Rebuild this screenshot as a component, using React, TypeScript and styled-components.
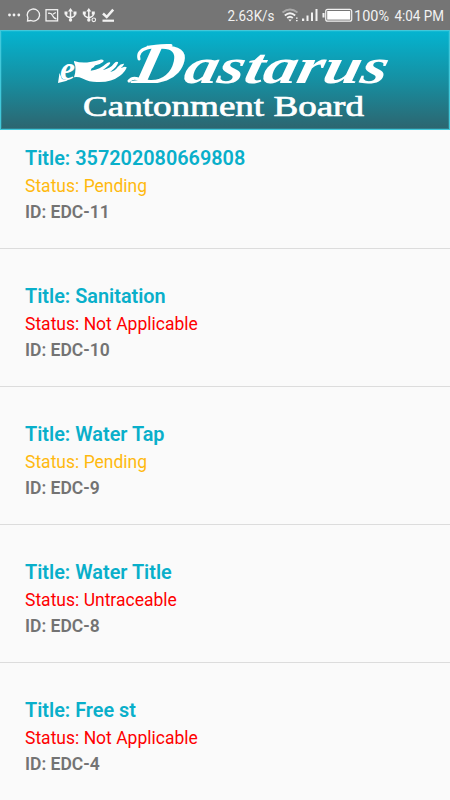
import React from "react";
import styled, { createGlobalStyle } from "styled-components";

const GlobalStyle = createGlobalStyle`
  * { box-sizing: border-box; }
  body { margin: 0; background: #fafafa; font-family: Roboto, sans-serif; }
`;

const Screen = styled.main`
  width: 450px;
  height: 800px;
  overflow: hidden;
  display: flex;
  flex-direction: column;
  background: #fafafa;
`;

const StatusBar = styled.header`
  flex: none;
  height: 30px;
  background: #757575;
`;

const StatusArt = styled.svg`
  display: block;
  font-family: Roboto, sans-serif;
  font-size: 14px;
`;

const Banner = styled.div`
  flex: none;
  height: 100px;
  border: 1px solid #41c8da;
  background: linear-gradient(#04b4d0, #1591a4 48%, #2d656f);
  box-shadow: inset 0 0 0 1px rgba(65, 200, 218, 0.25);
`;

const LogoArt = styled.svg`
  display: block;
  margin: -1px;
  font-family: "Liberation Serif", serif;
`;

const List = styled.ul`
  margin: 0;
  padding: 0;
  list-style: none;
`;

const Item = styled.li`
  height: 138px;
  padding: 36px 25px 0;
  border-bottom: 1px solid #dcdcdc;
  white-space: nowrap;

  &:first-child {
    height: 119px;
    padding-top: 17px;
  }
`;

const Title = styled.h2`
  margin: 0;
  height: 27px;
  font-size: 19.85px;
  line-height: 24px;
  font-weight: 600;
  color: #09afca;
`;

const Status = styled.p<{ $pending: boolean }>`
  margin: 0;
  height: 26px;
  font-size: 17.5px;
  line-height: 24px;
  color: ${(p) => (p.$pending ? "#ffb90f" : "#fe0000")};
`;

const Ident = styled.p`
  margin: 0;
  font-size: 17.5px;
  line-height: 24px;
  font-weight: 600;
  color: #737373;
`;

const complaints = [
  { title: "357202080669808", status: "Pending", id: "EDC-11" },
  { title: "Sanitation", status: "Not Applicable", id: "EDC-10" },
  { title: "Water Tap", status: "Pending", id: "EDC-9" },
  { title: "Water Title", status: "Untraceable", id: "EDC-8" },
  { title: "Free st", status: "Not Applicable", id: "EDC-4" },
];

function UsbIcon({ x, dot }: { x: number; dot?: boolean }) {
  return (
    <g transform={`translate(${x} 0)`}>
      <path d="M0 10v9M-4.500 12v2.500q0 2 4.500 3.500q4.500 -1.500 4.500 -3.500V12" fill="none" stroke="#f2f2f2" strokeWidth="1.500" />
      <path d="M-2.500 11.500L0 8l2.500 3.500zM-6 11.500h3v3h-3zM3 11.500h3v3H3z" fill="#f2f2f2" />
      <circle cy="20" r="1.700" fill="#f2f2f2" />
      {dot && <circle cx="5" cy="19.800" r="1.800" fill="#757575" stroke="#f2f2f2" strokeWidth="1.100" />}
    </g>
  );
}

function SystemStatus() {
  return (
    <StatusArt width="450" height="30" fill="#f2f2f2">
      <circle cx="9.500" cy="15" r="1.400" />
      <circle cx="14" cy="15" r="1.400" />
      <circle cx="18.800" cy="15" r="1.400" />
      <path d="M27.500 21l.4-3.200a6.200 6 0 1 1 3 2.700z" fill="none" stroke="#f2f2f2" strokeWidth="1.300" />
      <g fill="none" stroke="#f2f2f2" strokeWidth="1.300">
        <rect x="46" y="9.700" width="11.600" height="11.200" />
        <path d="M48 13.300q3.500-.5 4.500 2.200 1.500 3.300 4 3.300M52.800 14.200l3-1.700" />
      </g>
      <UsbIcon x={70.5} />
      <UsbIcon x={88.8} dot />
      <path d="M103 13.500l3.700 3.500 6.500-7.400" fill="none" stroke="#f2f2f2" strokeWidth="2.500" />
      <path d="M102.500 19.600h11.500v2.200h-11.500z" />
      <text x="227.500" y="20.500" textLength="47" lengthAdjust="spacingAndGlyphs">2.63K/s</text>
      <g fill="none" stroke="#f2f2f2" strokeWidth="1.800">
        <path d="M282.500 12.500q7.500-6 15 0" stroke="#aaa" />
        <path d="M284.800 15.500q5.200-4.500 10.400 0" />
        <path d="M287.200 18q2.800-2.500 5.600 0" />
      </g>
      <path d="M288.300 19.500h3.400L290 21.500zM296 17.500h1.600v1.300H296zM296 20h1.600v1.300H296z" />
      <path d="M302 18.500h2.200V21H302zM306.500 15.500h2V21h-2zM311 12.500h2V21h-2zM315.500 9h2v12h-2z" />
      <rect x="325.700" y="9.400" width="26" height="11.800" rx="2" fill="none" stroke="#f2f2f2" strokeWidth="1.200" />
      <rect x="327.200" y="11" width="23" height="8.600" fill="#fff" />
      <path d="M322.500 13h2v4.500h-2z" />
      <text x="354" y="20.500" textLength="35" lengthAdjust="spacingAndGlyphs">100%</text>
      <text x="394.500" y="20.500" textLength="49.500" lengthAdjust="spacingAndGlyphs">4:04 PM</text>
    </StatusArt>
  );
}

function Logo() {
  return (
    <LogoArt width="450" height="100" viewBox="0 30 450 100" fill="#fff">
      <text x="60" y="79.500" fontSize="34" fontStyle="italic" fontWeight="bold" textLength="15" lengthAdjust="spacingAndGlyphs">e</text>
      <path d="M58 83l1.500-10 2.500 6 6 1.500z" />
      <path d="M74 61Q82 63.500 90 62q6-1 11-2.500 4 0 2 2.500-3 2.500-8 3.500-1 2-3.500 3l-.8 2.200q10-1.700 15-6.700 3-2.500 4.500-1.500 1 1.500-7.500 7.700 8-2 11.500-7 2.500-2.200 4-1-.5 4-8 9.700 5-1 7.500-5 3-3.500 6.500-3.200-.8 2.500-3.500 4.500 4-2.500 6-1-1 4-6.700 8.500-9 7-23 6.300-8 0-14.500-3.500-4.500-2-8.500-1.200 3-8.500 0-15.300z" />
      <g fontStyle="italic" fontWeight="bold" transform="translate(0 83) skewX(-13)">
        <text x="131" y="0" fontSize="57" textLength="50" lengthAdjust="spacingAndGlyphs">D</text>
        <text x="182" y="0" fontSize="50" textLength="203" lengthAdjust="spacingAndGlyphs">astarus</text>
      </g>
      <path d="M139 59q-2-8 8-11 9-3 24-2.500M129 81q4-5 12-1" fill="none" stroke="#fff" strokeWidth="3" strokeLinecap="round" />
      <text x="83" y="116" fontSize="29" stroke="#fff" strokeWidth=".7" textLength="281" lengthAdjust="spacingAndGlyphs">Cantonment Board</text>
    </LogoArt>
  );
}

export default function App() {
  return (
    <Screen>
      <GlobalStyle />
      <StatusBar><SystemStatus /></StatusBar>
      <Banner><Logo /></Banner>
      <List>
        {complaints.map((c) => (
          <Item key={c.id}>
            <Title>Title: {c.title}</Title>
            <Status $pending={c.status === "Pending"}>Status: {c.status}</Status>
            <Ident>ID: {c.id}</Ident>
          </Item>
        ))}
      </List>
    </Screen>
  );
}
